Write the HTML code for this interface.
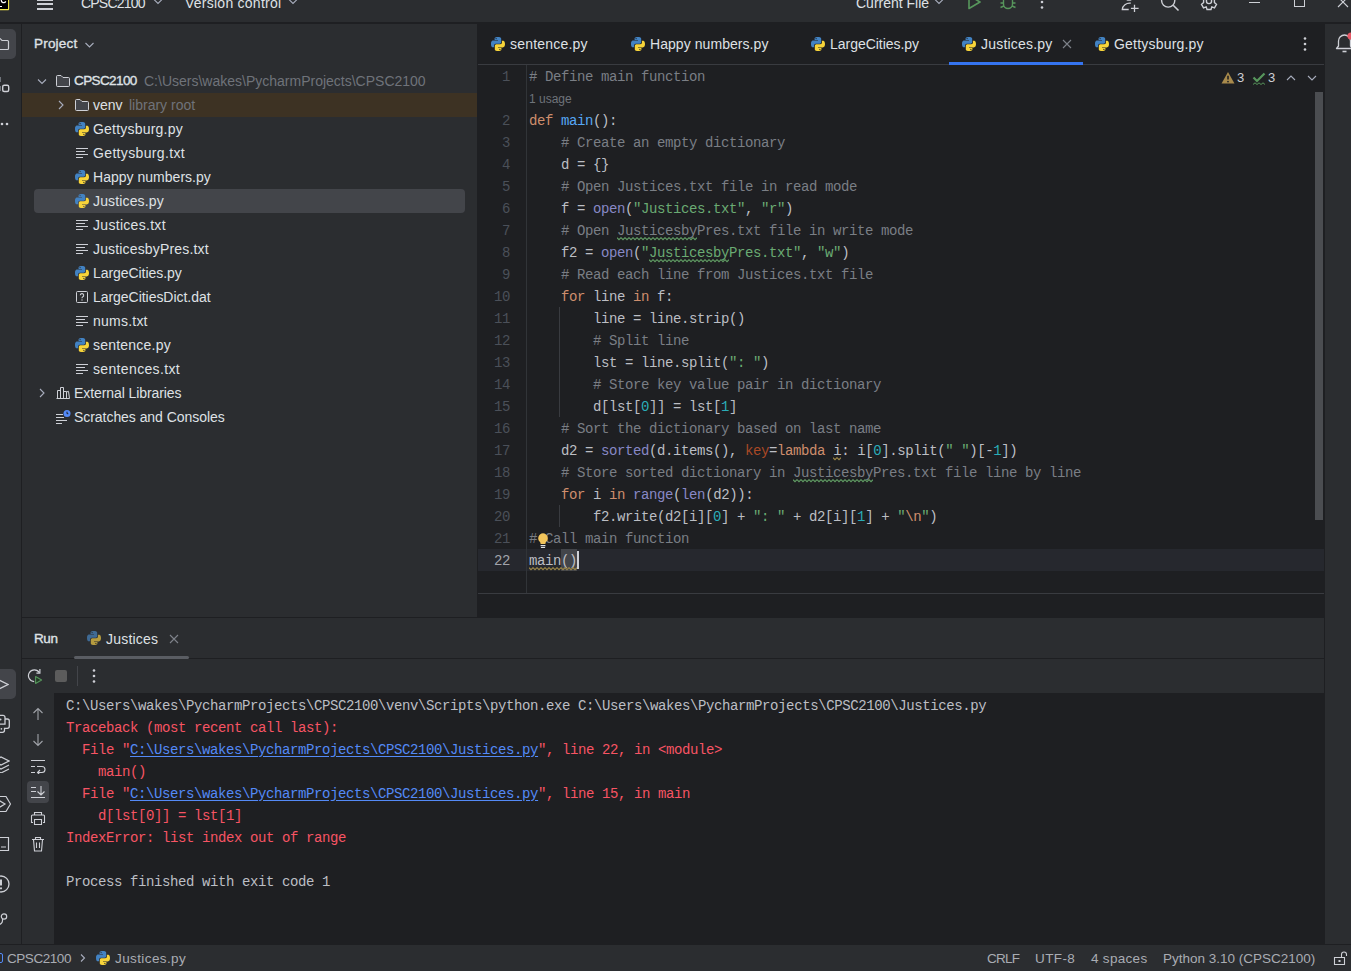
<!DOCTYPE html>
<html><head><meta charset="utf-8">
<style>
*{box-sizing:border-box;margin:0;padding:0}
html,body{width:1351px;height:971px;overflow:hidden;background:#2B2D30;font-family:"Liberation Sans",sans-serif;color:#DFE1E5}
.a{position:absolute}
.t{position:absolute;white-space:pre;font-size:14px;line-height:16px}
.ic{position:absolute}
.tn,.tb,.tg{position:absolute;white-space:pre;font-size:14px;letter-spacing:0.2px;line-height:24px;height:24px;color:#DFE1E5}
.tb{font-size:13.5px;letter-spacing:0;-webkit-text-stroke:0.35px #DFE1E5}
.tg{color:#6F737A;letter-spacing:0}
.sb{position:absolute;top:947px;white-space:pre;font-size:13.5px;line-height:24px;height:24px;color:#A9ACB3}
.tt{position:absolute;top:-5px;white-space:pre;font-size:14px;line-height:16px;height:16px;color:#DFE1E5}
/* editor */
.ln{position:absolute;left:478px;width:32px;text-align:right;font-family:"Liberation Mono",monospace;font-size:14px;letter-spacing:-0.4px;line-height:22px;height:22px;color:#4B5059}
.ln.cur{color:#A1A3AB}
.cl{position:absolute;left:529px;white-space:pre;font-family:"Liberation Mono",monospace;font-size:14px;letter-spacing:-0.4px;line-height:22px;height:22px;color:#BCBEC4}
.inlay{position:absolute;left:529px;font-size:12px;line-height:22px;height:22px;color:#6F737A;white-space:pre}
.cm{color:#7A7E85}.kw{color:#CF8E6D}.fn{color:#56A8F5}.st{color:#6AAB73}.nu{color:#2AACB8}.bi{color:#8888C6}.df{color:#BCBEC4}.ka{color:#AA4926}

/* console */
.co{position:absolute;left:66px;white-space:pre;font-family:"Liberation Mono",monospace;font-size:14px;letter-spacing:-0.4px;line-height:22px;height:22px;color:#BCBEC4}
.er{color:#F75464}
.lk{color:#548AF7;text-decoration:underline;text-underline-offset:2px}
</style></head>
<body>
<!-- top toolbar -->
<div class="a" style="left:0;top:0;width:1351px;height:23px;background:#2B2D30"></div>
<div class="a" style="left:0;top:22px;width:1351px;height:2px;background:#1E1F22"></div>
<svg class="ic" width="12" height="12" viewBox="0 0 12 12" style="left:0;top:0"><rect x="0" y="0" width="8.5" height="9.5" fill="#000"/><path fill="none" stroke="#F5EC4A" stroke-width="1.1" d="M0 9.6H8.2Q8.6 9.6 8.6 9.2V0"/><path fill="none" stroke="#fff" stroke-width="1.2" d="M1.3 0A2.4 2.4 0 0 0 5.8 1.4"/><path stroke="#fff" stroke-width="1.1" d="M0 6.5H2"/></svg>
<div class="a" style="left:37px;top:-1px;width:16px;height:2px;background:#CED0D6"></div>
<div class="a" style="left:37px;top:3px;width:16px;height:2px;background:#CED0D6"></div>
<div class="a" style="left:37px;top:8px;width:16px;height:2px;background:#CED0D6"></div>
<div class="tt" style="left:81px;letter-spacing:-0.8px">CPSC2100</div>
<svg class="ic" width="12" height="12" viewBox="0 0 12 12" style="left:152px;top:-5px"><path fill="none" stroke="#A8ADBD" stroke-width="1.1" d="M2 4.5L6 8.5L10 4.5"/></svg>
<div class="tt" style="left:185px;letter-spacing:0.25px">Version control</div>
<svg class="ic" width="12" height="12" viewBox="0 0 12 12" style="left:287px;top:-5px"><path fill="none" stroke="#A8ADBD" stroke-width="1.1" d="M2 4.5L6 8.5L10 4.5"/></svg>
<div class="tt" style="left:856px">Current File</div>
<svg class="ic" width="12" height="12" viewBox="0 0 12 12" style="left:933px;top:-5px"><path fill="none" stroke="#A8ADBD" stroke-width="1.1" d="M2 4.5L6 8.5L10 4.5"/></svg>
<svg class="ic" width="16" height="16" viewBox="0 0 16 16" style="left:966px;top:-6px"><path fill="none" stroke="#57965C" stroke-width="1.6" d="M3 1.5L14 8L3 14.5Z" stroke-linejoin="round"/></svg>
<svg class="ic" width="18" height="18" viewBox="0 0 18 18" style="left:999px;top:-8px"><path fill="none" stroke="#57965C" stroke-width="1.4" d="M4.5 4V12A4.5 4.5 0 0 0 13.5 12V4M1.5 11H4.5M13.5 11H16.5M1.5 15.5L4.8 14M16.5 15.5L13.2 14M1.5 6.5L4.5 7.5M16.5 6.5L13.5 7.5"/></svg>
<svg class="ic" width="4" height="16" viewBox="0 0 4 16" style="left:1040px;top:-6px"><circle cx="2" cy="2.5" r="1.3" fill="#CED0D6"/><circle cx="2" cy="8" r="1.3" fill="#CED0D6"/><circle cx="2" cy="13.5" r="1.3" fill="#CED0D6"/></svg>
<svg class="ic" width="20" height="20" viewBox="0 0 20 20" style="left:1120px;top:-8px"><circle cx="9" cy="5" r="3.2" fill="none" stroke="#CED0D6" stroke-width="1.3"/><path fill="none" stroke="#CED0D6" stroke-width="1.3" d="M8.7 17.5H2.3A7.5 6.5 0 0 1 10.8 11.2M14.5 12.8V20M10.9 16.4H18.6"/></svg>
<svg class="ic" width="20" height="20" viewBox="0 0 20 20" style="left:1160px;top:-8px"><circle cx="8.2" cy="8.5" r="6.6" fill="none" stroke="#CED0D6" stroke-width="1.4"/><path stroke="#CED0D6" stroke-width="1.6" d="M13.2 13.2L18.5 18.5"/></svg>
<svg class="ic" width="20" height="20" viewBox="0 0 20 20" style="left:1199px;top:-9px"><path fill="none" stroke="#CED0D6" stroke-width="1.4" d="M8 1.5H12L12.8 4.2L15.5 3.2L17.5 6.6L15.4 8.5V11.5L17.5 13.4L15.5 16.8L12.8 15.8L12 18.5H8L7.2 15.8L4.5 16.8L2.5 13.4L4.6 11.5V8.5L2.5 6.6L4.5 3.2L7.2 4.2Z"/><circle cx="10" cy="10" r="2.6" fill="none" stroke="#CED0D6" stroke-width="1.4"/></svg>
<div class="a" style="left:1249px;top:2px;width:11px;height:1px;background:#CED0D6"></div>
<div class="a" style="left:1294px;top:-4px;width:11px;height:11px;border:1px solid #CED0D6"></div>
<svg class="ic" width="12" height="12" viewBox="0 0 12 12" style="left:1337px;top:-4px"><path stroke="#CED0D6" stroke-width="1.1" d="M1 1L11 11M11 1L1 11"/></svg>

<!-- left strip -->
<div class="a" style="left:-14px;top:29px;width:30px;height:30px;border-radius:5px;background:#43454A"></div>
<svg class="ic" width="16" height="16" viewBox="0 0 16 16" style="left:-6px;top:36px"><path fill="none" stroke="#CED0D6" stroke-width="1.2" d="M1.5 3.5A1 1 0 0 1 2.5 2.5H6L8 4.5H13.5A1 1 0 0 1 14.5 5.5V12.5A1 1 0 0 1 13.5 13.5H2.5A1 1 0 0 1 1.5 12.5Z"/></svg>
<svg class="ic" width="12" height="24" viewBox="0 0 12 24" style="left:0;top:72px"><rect x="2.7" y="13.2" width="6" height="6.3" rx="1.5" fill="none" stroke="#CED0D6" stroke-width="1.4"/><rect x="0" y="5" width="1" height="5" fill="#6F737A"/><rect x="0" y="14" width="1" height="5" fill="#6F737A"/></svg>
<svg class="ic" width="16" height="16" viewBox="0 0 16 16" style="left:-6px;top:116px"><circle cx="3" cy="8" r="1.3" fill="#CED0D6"/><circle cx="8" cy="8" r="1.3" fill="#CED0D6"/><circle cx="13" cy="8" r="1.3" fill="#CED0D6"/></svg>
<div class="a" style="left:-14px;top:669px;width:30px;height:30px;border-radius:5px;background:#43454A"></div>
<svg class="ic" width="16" height="16" viewBox="0 0 16 16" style="left:-7px;top:676px"><path fill="none" stroke="#CED0D6" stroke-width="1.3" d="M3 2.5L15 8.5L3 14.5"/></svg>
<svg class="ic" width="12" height="30" viewBox="0 0 12 30" style="left:0;top:708px"><path fill="none" stroke="#CED0D6" stroke-width="1.3" d="M-2 7.4H3A2 2 0 0 1 5 9.4V16.2H-2M5 11H7.3A2 2 0 0 1 9.3 13V18.3A2 2 0 0 1 7.3 20.3H4.5V22.3A2 2 0 0 1 2.5 24.3H-2"/><circle cx="0.6" cy="11.5" r="0.9" fill="#CED0D6"/><circle cx="1.4" cy="20.8" r="0.9" fill="#CED0D6"/></svg>
<svg class="ic" width="18" height="18" viewBox="0 0 18 18" style="left:-8px;top:755px"><path fill="none" stroke="#CED0D6" stroke-width="1.2" d="M1 6L9 2L17 6L9 10ZM1 10L9 14L17 10M1 14L9 18L17 14"/></svg>
<svg class="ic" width="20" height="18" viewBox="0 0 20 18" style="left:-9px;top:795px"><path fill="none" stroke="#CED0D6" stroke-width="1.2" d="M5 1.5H15L19.5 9L15 16.5H5L0.5 9Z"/><path fill="none" stroke="#CED0D6" stroke-width="1.2" d="M7.5 5L14 9L7.5 13"/></svg>
<svg class="ic" width="18" height="16" viewBox="0 0 18 16" style="left:-8px;top:836px"><path fill="none" stroke="#CED0D6" stroke-width="1.2" d="M1.5 1.5H16.5V14.5H1.5ZM4 5L7 8L4 11M9 11H14"/></svg>
<svg class="ic" width="18" height="18" viewBox="0 0 18 18" style="left:-8px;top:875px"><circle cx="9" cy="9" r="8" fill="none" stroke="#CED0D6" stroke-width="1.3"/><path stroke="#CED0D6" stroke-width="2" d="M9 4.5V10.5"/><circle cx="9" cy="13.3" r="1.1" fill="#CED0D6"/></svg>
<svg class="ic" width="16" height="18" viewBox="0 0 16 18" style="left:-6px;top:911px"><path fill="none" stroke="#CED0D6" stroke-width="1.2" d="M4 1V17M4 13.5A4 4 0 0 0 8.5 9.5V8"/><circle cx="10" cy="5.5" r="2.7" fill="none" stroke="#CED0D6" stroke-width="1.2"/></svg>
<div class="a" style="left:21px;top:24px;width:1px;height:921px;background:#1E1F22"></div>
<!-- right strip -->
<svg class="ic" width="20" height="22" viewBox="0 0 20 22" style="left:1335px;top:32px"><path fill="none" stroke="#CED0D6" stroke-width="1.3" stroke-linejoin="round" d="M1.5 16.5L3.5 14V9A6 6 0 0 1 15.5 9V14L17.5 16.5Z"/><path stroke="#CED0D6" stroke-width="1.6" d="M7.5 19.5H11.5"/><circle cx="16" cy="4" r="3.6" fill="#E55765"/></svg>
<div class="a" style="left:1324px;top:24px;width:1px;height:921px;background:#1E1F22"></div>

<!-- project panel -->
<div class="a" style="left:22px;top:93px;width:455px;height:24px;background:#3D3223"></div>
<div class="a" style="left:34px;top:189px;width:431px;height:24px;border-radius:4px;background:#43454A"></div>
<div class="tb" style="left:34px;top:32px;letter-spacing:0.2px">Project</div>
<svg class="ic" width="16" height="16" viewBox="0 0 16 16" style="left:81px;top:37px"><path fill="none" stroke="#A8ADBD" stroke-width="1.1" d="M4.5 6L8.5 10L12.5 6"/></svg>
<svg class="ic" width="16" height="16" viewBox="0 0 16 16" style="left:34px;top:73px"><path fill="none" stroke="#A8ADBD" stroke-width="1.1" d="M4 6.5L8 10.5L12 6.5"/></svg>
<svg class="ic" width="16" height="16" viewBox="0 0 16 16" style="left:55px;top:73px"><path fill="#43454A" stroke="#CED0D6" stroke-width="1" d="M1.5 3.5A1 1 0 0 1 2.5 2.5H6L8 4.5H13.5A1 1 0 0 1 14.5 5.5V12.5A1 1 0 0 1 13.5 13.5H2.5A1 1 0 0 1 1.5 12.5Z"/></svg>
<div class="tb" style="left:74px;top:69px;letter-spacing:-0.6px">CPSC2100</div>
<div class="tg" style="left:144px;top:69px">C:\Users\wakes\PycharmProjects\CPSC2100</div>
<svg class="ic" width="16" height="16" viewBox="0 0 16 16" style="left:53px;top:97px"><path fill="none" stroke="#A8ADBD" stroke-width="1.1" d="M6 4L10 8L6 12"/></svg>
<svg class="ic" width="16" height="16" viewBox="0 0 16 16" style="left:74px;top:97px"><path fill="#43454A" stroke="#CED0D6" stroke-width="1" d="M1.5 3.5A1 1 0 0 1 2.5 2.5H6L8 4.5H13.5A1 1 0 0 1 14.5 5.5V12.5A1 1 0 0 1 13.5 13.5H2.5A1 1 0 0 1 1.5 12.5Z"/></svg>
<div class="tn" style="left:93px;top:93px;letter-spacing:-0.02px">venv</div>
<div class="tg" style="left:129px;top:93px">library root</div>
<svg class="ic" width="16" height="16" viewBox="0 0 16 16" style="left:74px;top:121px"><path fill="#4282C2" d="M7.9 1C4.4 1 4.6 2.5 4.6 2.5V4.1H8V4.6H3.2S1 4.3 1 7.9c0 3.5 1.9 3.4 1.9 3.4H4.1V9.6S4 7.7 6 7.7H9.3S11.2 7.8 11.2 5.9V2.8S11.5 1 7.9 1ZM6.1 2A.6.6 0 1 1 6.1 3.2.6.6 0 0 1 6.1 2Z"/><path fill="#F7D43A" d="M8.1 15c3.5 0 3.3-1.5 3.3-1.5V11.9H8V11.4h4.8S15 11.700 15 8.1c0-3.5-1.9-3.4-1.9-3.4H11.900V6.4S12 8.3 10 8.3H6.7S4.8 8.2 4.8 10.1v3.1S4.5 15 8.1 15ZM9.9 14A.6.6 0 1 1 9.9 12.8.6.6 0 0 1 9.9 14Z"/></svg>
<div class="tn" style="left:93px;top:117px;letter-spacing:0.21px">Gettysburg.py</div>
<svg class="ic" width="16" height="16" viewBox="0 0 16 16" style="left:74px;top:145px"><path stroke="#CED0D6" stroke-width="1.1" d="M2 3.5H14M2 6.5H11M2 9.5H14M2 12.5H9"/></svg>
<div class="tn" style="left:93px;top:141px;letter-spacing:0.35px">Gettysburg.txt</div>
<svg class="ic" width="16" height="16" viewBox="0 0 16 16" style="left:74px;top:169px"><path fill="#4282C2" d="M7.9 1C4.4 1 4.6 2.5 4.6 2.5V4.1H8V4.6H3.2S1 4.3 1 7.9c0 3.5 1.9 3.4 1.9 3.4H4.1V9.6S4 7.7 6 7.7H9.3S11.2 7.8 11.2 5.9V2.8S11.5 1 7.9 1ZM6.1 2A.6.6 0 1 1 6.1 3.2.6.6 0 0 1 6.1 2Z"/><path fill="#F7D43A" d="M8.1 15c3.5 0 3.3-1.5 3.3-1.5V11.9H8V11.4h4.8S15 11.700 15 8.1c0-3.5-1.9-3.4-1.9-3.4H11.900V6.4S12 8.3 10 8.3H6.7S4.8 8.2 4.8 10.1v3.1S4.5 15 8.1 15ZM9.9 14A.6.6 0 1 1 9.9 12.8.6.6 0 0 1 9.9 14Z"/></svg>
<div class="tn" style="left:93px;top:165px;letter-spacing:0.02px">Happy numbers.py</div>
<svg class="ic" width="16" height="16" viewBox="0 0 16 16" style="left:74px;top:193px"><path fill="#4282C2" d="M7.9 1C4.4 1 4.6 2.5 4.6 2.5V4.1H8V4.6H3.2S1 4.3 1 7.9c0 3.5 1.9 3.4 1.9 3.4H4.1V9.6S4 7.7 6 7.7H9.3S11.2 7.8 11.2 5.9V2.8S11.5 1 7.9 1ZM6.1 2A.6.6 0 1 1 6.1 3.2.6.6 0 0 1 6.1 2Z"/><path fill="#F7D43A" d="M8.1 15c3.5 0 3.3-1.5 3.3-1.5V11.9H8V11.4h4.8S15 11.700 15 8.1c0-3.5-1.9-3.4-1.9-3.4H11.900V6.4S12 8.3 10 8.3H6.7S4.8 8.2 4.8 10.1v3.1S4.5 15 8.1 15ZM9.9 14A.6.6 0 1 1 9.9 12.8.6.6 0 0 1 9.9 14Z"/></svg>
<div class="tn" style="left:93px;top:189px;letter-spacing:0.15px">Justices.py</div>
<svg class="ic" width="16" height="16" viewBox="0 0 16 16" style="left:74px;top:217px"><path stroke="#CED0D6" stroke-width="1.1" d="M2 3.5H14M2 6.5H11M2 9.5H14M2 12.5H9"/></svg>
<div class="tn" style="left:93px;top:213px;letter-spacing:0.30px">Justices.txt</div>
<svg class="ic" width="16" height="16" viewBox="0 0 16 16" style="left:74px;top:241px"><path stroke="#CED0D6" stroke-width="1.1" d="M2 3.5H14M2 6.5H11M2 9.5H14M2 12.5H9"/></svg>
<div class="tn" style="left:93px;top:237px;letter-spacing:0.16px">JusticesbyPres.txt</div>
<svg class="ic" width="16" height="16" viewBox="0 0 16 16" style="left:74px;top:265px"><path fill="#4282C2" d="M7.9 1C4.4 1 4.6 2.5 4.6 2.5V4.1H8V4.6H3.2S1 4.3 1 7.9c0 3.5 1.9 3.4 1.9 3.4H4.1V9.6S4 7.7 6 7.7H9.3S11.2 7.8 11.2 5.9V2.8S11.5 1 7.9 1ZM6.1 2A.6.6 0 1 1 6.1 3.2.6.6 0 0 1 6.1 2Z"/><path fill="#F7D43A" d="M8.1 15c3.5 0 3.3-1.5 3.3-1.5V11.9H8V11.4h4.8S15 11.700 15 8.1c0-3.5-1.9-3.4-1.9-3.4H11.900V6.4S12 8.3 10 8.3H6.7S4.8 8.2 4.8 10.1v3.1S4.5 15 8.1 15ZM9.9 14A.6.6 0 1 1 9.9 12.8.6.6 0 0 1 9.9 14Z"/></svg>
<div class="tn" style="left:93px;top:261px;letter-spacing:-0.06px">LargeCities.py</div>
<svg class="ic" width="16" height="16" viewBox="0 0 16 16" style="left:74px;top:289px"><rect x="2.5" y="2.5" width="11" height="11" rx="1" fill="none" stroke="#CED0D6"/><path d="M6.3 6.3A1.7 1.7 0 1 1 8.6 7.9C8 8.2 8 8.6 8 9.3" fill="none" stroke="#CED0D6" stroke-width="1.1"/><circle cx="8" cy="11" r=".7" fill="#CED0D6"/></svg>
<div class="tn" style="left:93px;top:285px;letter-spacing:-0.04px">LargeCitiesDict.dat</div>
<svg class="ic" width="16" height="16" viewBox="0 0 16 16" style="left:74px;top:313px"><path stroke="#CED0D6" stroke-width="1.1" d="M2 3.5H14M2 6.5H11M2 9.5H14M2 12.5H9"/></svg>
<div class="tn" style="left:93px;top:309px;letter-spacing:0.23px">nums.txt</div>
<svg class="ic" width="16" height="16" viewBox="0 0 16 16" style="left:74px;top:337px"><path fill="#4282C2" d="M7.9 1C4.4 1 4.6 2.5 4.6 2.5V4.1H8V4.6H3.2S1 4.3 1 7.9c0 3.5 1.9 3.4 1.9 3.4H4.1V9.6S4 7.7 6 7.7H9.3S11.2 7.8 11.2 5.9V2.8S11.5 1 7.9 1ZM6.1 2A.6.6 0 1 1 6.1 3.2.6.6 0 0 1 6.1 2Z"/><path fill="#F7D43A" d="M8.1 15c3.5 0 3.3-1.5 3.3-1.5V11.9H8V11.4h4.8S15 11.700 15 8.1c0-3.5-1.9-3.4-1.9-3.4H11.900V6.4S12 8.3 10 8.3H6.7S4.8 8.2 4.8 10.1v3.1S4.5 15 8.1 15ZM9.9 14A.6.6 0 1 1 9.9 12.8.6.6 0 0 1 9.9 14Z"/></svg>
<div class="tn" style="left:93px;top:333px;letter-spacing:0.22px">sentence.py</div>
<svg class="ic" width="16" height="16" viewBox="0 0 16 16" style="left:74px;top:361px"><path stroke="#CED0D6" stroke-width="1.1" d="M2 3.5H14M2 6.5H11M2 9.5H14M2 12.5H9"/></svg>
<div class="tn" style="left:93px;top:357px;letter-spacing:0.35px">sentences.txt</div>
<svg class="ic" width="16" height="16" viewBox="0 0 16 16" style="left:34px;top:385px"><path fill="none" stroke="#A8ADBD" stroke-width="1.1" d="M6 4L10 8L6 12"/></svg>
<svg class="ic" width="16" height="16" viewBox="0 0 16 16" style="left:55px;top:385px"><path fill="none" stroke="#CED0D6" d="M1.5 13.5H14.5M2.5 13.5V5.5H5.5V13.5M5.5 13.5V2.5H8.5V13.5M8.5 13.5V6.5H11.5V13.5"/><path fill="none" stroke="#CED0D6" d="M11.5 7L13.5 6.3L14.5 13.5"/></svg>
<div class="tn" style="left:74px;top:381px;letter-spacing:-0.08px">External Libraries</div>
<svg class="ic" width="16" height="16" viewBox="0 0 16 16" style="left:55px;top:409px"><path stroke="#CED0D6" stroke-width="1.1" d="M1 5.5H8M1 8.5H9M1 11.5H12M1 14.5H7"/><circle cx="12" cy="4.5" r="3.5" fill="#548AF7"/><path stroke="#1E1F22" stroke-width="1" d="M12 2.7V4.7H13.3" fill="none"/></svg>
<div class="tn" style="left:74px;top:405px;letter-spacing:-0.05px">Scratches and Consoles</div>
<div class="a" style="left:477px;top:24px;width:1px;height:594px;background:#1E1F22"></div>

<!-- editor -->
<div class="a" style="left:478px;top:24px;width:846px;height:594px;background:#1E1F22"></div>
<div class="a" style="left:478px;top:64px;width:846px;height:1px;background:#393B40"></div>
<svg class="ic" width="16" height="16" viewBox="0 0 16 16" style="left:490px;top:36px"><path fill="#4282C2" d="M7.9 1C4.4 1 4.6 2.5 4.6 2.5V4.1H8V4.6H3.2S1 4.3 1 7.9c0 3.5 1.9 3.4 1.9 3.4H4.1V9.6S4 7.7 6 7.7H9.3S11.2 7.8 11.2 5.9V2.8S11.5 1 7.9 1ZM6.1 2A.6.6 0 1 1 6.1 3.2.6.6 0 0 1 6.1 2Z"/><path fill="#F7D43A" d="M8.1 15c3.5 0 3.3-1.5 3.3-1.5V11.9H8V11.4h4.8S15 11.700 15 8.1c0-3.5-1.9-3.4-1.9-3.4H11.900V6.4S12 8.3 10 8.3H6.7S4.8 8.2 4.8 10.1v3.1S4.5 15 8.1 15ZM9.9 14A.6.6 0 1 1 9.9 12.8.6.6 0 0 1 9.9 14Z"/></svg>
<div class="tn" style="left:510px;top:32px;color:#DFE1E5;letter-spacing:0.20px">sentence.py</div>
<svg class="ic" width="16" height="16" viewBox="0 0 16 16" style="left:630px;top:36px"><path fill="#4282C2" d="M7.9 1C4.4 1 4.6 2.5 4.6 2.5V4.1H8V4.6H3.2S1 4.3 1 7.9c0 3.5 1.9 3.4 1.9 3.4H4.1V9.6S4 7.7 6 7.7H9.3S11.2 7.8 11.2 5.9V2.8S11.5 1 7.9 1ZM6.1 2A.6.6 0 1 1 6.1 3.2.6.6 0 0 1 6.1 2Z"/><path fill="#F7D43A" d="M8.1 15c3.5 0 3.3-1.5 3.3-1.5V11.9H8V11.4h4.8S15 11.700 15 8.1c0-3.5-1.9-3.4-1.9-3.4H11.900V6.4S12 8.3 10 8.3H6.7S4.8 8.2 4.8 10.1v3.1S4.5 15 8.1 15ZM9.9 14A.6.6 0 1 1 9.9 12.8.6.6 0 0 1 9.9 14Z"/></svg>
<div class="tn" style="left:650px;top:32px;color:#DFE1E5;letter-spacing:0.06px">Happy numbers.py</div>
<svg class="ic" width="16" height="16" viewBox="0 0 16 16" style="left:810px;top:36px"><path fill="#4282C2" d="M7.9 1C4.4 1 4.6 2.5 4.6 2.5V4.1H8V4.6H3.2S1 4.3 1 7.9c0 3.5 1.9 3.4 1.9 3.4H4.1V9.6S4 7.7 6 7.7H9.3S11.2 7.8 11.2 5.9V2.8S11.5 1 7.9 1ZM6.1 2A.6.6 0 1 1 6.1 3.2.6.6 0 0 1 6.1 2Z"/><path fill="#F7D43A" d="M8.1 15c3.5 0 3.3-1.5 3.3-1.5V11.9H8V11.4h4.8S15 11.700 15 8.1c0-3.5-1.9-3.4-1.9-3.4H11.900V6.4S12 8.3 10 8.3H6.7S4.8 8.2 4.8 10.1v3.1S4.5 15 8.1 15ZM9.9 14A.6.6 0 1 1 9.9 12.8.6.6 0 0 1 9.9 14Z"/></svg>
<div class="tn" style="left:830px;top:32px;color:#DFE1E5;letter-spacing:-0.03px">LargeCities.py</div>
<svg class="ic" width="16" height="16" viewBox="0 0 16 16" style="left:961px;top:36px"><path fill="#4282C2" d="M7.9 1C4.4 1 4.6 2.5 4.6 2.5V4.1H8V4.6H3.2S1 4.3 1 7.9c0 3.5 1.9 3.4 1.9 3.4H4.1V9.6S4 7.7 6 7.7H9.3S11.2 7.8 11.2 5.9V2.8S11.5 1 7.9 1ZM6.1 2A.6.6 0 1 1 6.1 3.2.6.6 0 0 1 6.1 2Z"/><path fill="#F7D43A" d="M8.1 15c3.5 0 3.3-1.5 3.3-1.5V11.9H8V11.4h4.8S15 11.700 15 8.1c0-3.5-1.9-3.4-1.9-3.4H11.900V6.4S12 8.3 10 8.3H6.7S4.8 8.2 4.8 10.1v3.1S4.5 15 8.1 15ZM9.9 14A.6.6 0 1 1 9.9 12.8.6.6 0 0 1 9.9 14Z"/></svg>
<div class="tn" style="left:981px;top:32px;color:#DFE1E5;letter-spacing:0.20px">Justices.py</div>
<svg class="ic" width="16" height="16" viewBox="0 0 16 16" style="left:1094px;top:36px"><path fill="#4282C2" d="M7.9 1C4.4 1 4.6 2.5 4.6 2.5V4.1H8V4.6H3.2S1 4.3 1 7.9c0 3.5 1.9 3.4 1.9 3.4H4.1V9.6S4 7.7 6 7.7H9.3S11.2 7.8 11.2 5.9V2.8S11.5 1 7.9 1ZM6.1 2A.6.6 0 1 1 6.1 3.2.6.6 0 0 1 6.1 2Z"/><path fill="#F7D43A" d="M8.1 15c3.5 0 3.3-1.5 3.3-1.5V11.9H8V11.4h4.8S15 11.700 15 8.1c0-3.5-1.9-3.4-1.9-3.4H11.900V6.4S12 8.3 10 8.3H6.7S4.8 8.2 4.8 10.1v3.1S4.5 15 8.1 15ZM9.9 14A.6.6 0 1 1 9.9 12.8.6.6 0 0 1 9.9 14Z"/></svg>
<div class="tn" style="left:1114px;top:32px;color:#DFE1E5;letter-spacing:0.20px">Gettysburg.py</div>
<svg class="ic" width="12" height="12" viewBox="0 0 12 12" style="left:1061px;top:38px"><path stroke="#7E828A" stroke-width="1.1" d="M2 2L10 10M10 2L2 10"/></svg>
<div class="a" style="left:949px;top:62px;width:134px;height:3px;background:#3574F0"></div>
<svg class="ic" width="4" height="16" viewBox="0 0 4 16" style="left:1303px;top:36px"><circle cx="2" cy="2.5" r="1.3" fill="#CED0D6"/><circle cx="2" cy="8" r="1.3" fill="#CED0D6"/><circle cx="2" cy="13.5" r="1.3" fill="#CED0D6"/></svg>
<svg class="ic" width="14" height="14" viewBox="0 0 14 14" style="left:1221px;top:71px"><path fill="#A88A4C" d="M7 1L13.5 12.5H0.5Z"/><path stroke="#1E1F22" stroke-width="1.6" d="M7 4.8V8.6"/><circle cx="7" cy="10.6" r=".9" fill="#1E1F22"/></svg>
<div class="a" style="left:1237px;top:70px;font-size:13px;line-height:16px;color:#CED0D6">3</div>
<svg class="ic" width="14" height="14" viewBox="0 0 14 14" style="left:1252px;top:72px"><path fill="none" stroke="#57965C" stroke-width="2.2" d="M1.5 5.5L5 9L12.5 1.5"/><path fill="none" stroke="#57965C" stroke-width="1" d="M1 12.5L3 10.8L5 12.5L7 10.8L9 12.5L11 10.8L13 12.5"/></svg>
<div class="a" style="left:1268px;top:70px;font-size:13px;line-height:16px;color:#CED0D6">3</div>
<svg class="ic" width="12" height="12" viewBox="0 0 12 12" style="left:1285px;top:72px"><path fill="none" stroke="#A8ADBD" stroke-width="1.1" d="M2 8L6 4L10 8"/></svg>
<svg class="ic" width="12" height="12" viewBox="0 0 12 12" style="left:1306px;top:72px"><path fill="none" stroke="#A8ADBD" stroke-width="1.1" d="M2 4L6 8L10 4"/></svg>
<div class="a" style="left:1315px;top:92px;width:8px;height:428px;background:#4B4D51"></div>
<div class="a" style="left:478px;top:549px;width:846px;height:22px;background:#26282E"></div>
<div class="a" style="left:526px;top:65px;width:1px;height:528px;background:#313438"></div>
<div class="a" style="left:478px;top:593px;width:846px;height:1px;background:#393B40"></div>
<div class="a" style="left:559px;top:307px;width:1px;height:110px;background:#393B40"></div>
<div class="a" style="left:559px;top:505px;width:1px;height:22px;background:#393B40"></div>
<div class="a" style="left:561px;top:549px;width:16px;height:22px;background:#43454A"></div>
<div class="ln" style="top:66px">1</div>
<div class="cl" style="top:66px"><span class="cm"># Define main function</span></div>
<div class="inlay" style="top:88px">1 usage</div>
<div class="ln" style="top:110px">2</div>
<div class="cl" style="top:110px"><span class="kw">def</span><span class="df"> </span><span class="fn">main</span><span class="df">():</span></div>
<div class="ln" style="top:132px">3</div>
<div class="cl" style="top:132px"><span class="df">    </span><span class="cm"># Create an empty dictionary</span></div>
<div class="ln" style="top:154px">4</div>
<div class="cl" style="top:154px"><span class="df">    d = {}</span></div>
<div class="ln" style="top:176px">5</div>
<div class="cl" style="top:176px"><span class="df">    </span><span class="cm"># Open Justices.txt file in read mode</span></div>
<div class="ln" style="top:198px">6</div>
<div class="cl" style="top:198px"><span class="df">    f = </span><span class="bi">open</span><span class="df">(</span><span class="st">"Justices.txt"</span><span class="df">, </span><span class="st">"r"</span><span class="df">)</span></div>
<div class="ln" style="top:220px">7</div>
<div class="cl" style="top:220px"><span class="df">    </span><span class="cm"># Open </span><span class="cm wv">Justicesby</span><span class="cm">Pres.txt file in write mode</span></div>
<div class="ln" style="top:242px">8</div>
<div class="cl" style="top:242px"><span class="df">    f2 = </span><span class="bi">open</span><span class="df">(</span><span class="st">"</span><span class="st wv">Justicesby</span><span class="st">Pres.txt"</span><span class="df">, </span><span class="st">"w"</span><span class="df">)</span></div>
<div class="ln" style="top:264px">9</div>
<div class="cl" style="top:264px"><span class="df">    </span><span class="cm"># Read each line from Justices.txt file</span></div>
<div class="ln" style="top:286px">10</div>
<div class="cl" style="top:286px"><span class="df">    </span><span class="kw">for</span><span class="df"> line </span><span class="kw">in</span><span class="df"> f:</span></div>
<div class="ln" style="top:308px">11</div>
<div class="cl" style="top:308px"><span class="df">        line = line.strip()</span></div>
<div class="ln" style="top:330px">12</div>
<div class="cl" style="top:330px"><span class="df">        </span><span class="cm"># Split line</span></div>
<div class="ln" style="top:352px">13</div>
<div class="cl" style="top:352px"><span class="df">        lst = line.split(</span><span class="st">": "</span><span class="df">)</span></div>
<div class="ln" style="top:374px">14</div>
<div class="cl" style="top:374px"><span class="df">        </span><span class="cm"># Store key value pair in dictionary</span></div>
<div class="ln" style="top:396px">15</div>
<div class="cl" style="top:396px"><span class="df">        d[lst[</span><span class="nu">0</span><span class="df">]] = lst[</span><span class="nu">1</span><span class="df">]</span></div>
<div class="ln" style="top:418px">16</div>
<div class="cl" style="top:418px"><span class="df">    </span><span class="cm"># Sort the dictionary based on last name</span></div>
<div class="ln" style="top:440px">17</div>
<div class="cl" style="top:440px"><span class="df">    d2 = </span><span class="bi">sorted</span><span class="df">(d.items(), </span><span class="ka">key</span><span class="df">=</span><span class="kw">lambda</span><span class="df"> </span><span class="df wk">i</span><span class="df">: i[</span><span class="nu">0</span><span class="df">].split(</span><span class="st">" "</span><span class="df">)[-</span><span class="nu">1</span><span class="df">])</span></div>
<div class="ln" style="top:462px">18</div>
<div class="cl" style="top:462px"><span class="df">    </span><span class="cm"># Store sorted dictionary in </span><span class="cm wv">Justicesby</span><span class="cm">Pres.txt file line by line</span></div>
<div class="ln" style="top:484px">19</div>
<div class="cl" style="top:484px"><span class="df">    </span><span class="kw">for</span><span class="df"> i </span><span class="kw">in</span><span class="df"> </span><span class="bi">range</span><span class="df">(</span><span class="bi">len</span><span class="df">(d2)):</span></div>
<div class="ln" style="top:506px">20</div>
<div class="cl" style="top:506px"><span class="df">        f2.write(d2[i][</span><span class="nu">0</span><span class="df">] + </span><span class="st">": "</span><span class="df"> + d2[i][</span><span class="nu">1</span><span class="df">] + </span><span class="st">"</span><span class="kw">\n</span><span class="st">"</span><span class="df">)</span></div>
<div class="ln" style="top:528px">21</div>
<div class="cl" style="top:528px"><span class="cm"># Call main function</span></div>
<div class="ln cur" style="top:550px">22</div>
<div class="cl" style="top:550px"><span class="df ww">main</span><span class="df ww bm">()</span></div>
<svg class="ic" width="80" height="4" viewBox="0 0 80 4" style="left:617px;top:237px"><polyline fill="none" stroke="#62A066" stroke-width="1.1" points="0,0.7 2,2.7 4,0.7 6,2.7 8,0.7 10,2.7 12,0.7 14,2.7 16,0.7 18,2.7 20,0.7 22,2.7 24,0.7 26,2.7 28,0.7 30,2.7 32,0.7 34,2.7 36,0.7 38,2.7 40,0.7 42,2.7 44,0.7 46,2.7 48,0.7 50,2.7 52,0.7 54,2.7 56,0.7 58,2.7 60,0.7 62,2.7 64,0.7 66,2.7 68,0.7 70,2.7 72,0.7 74,2.7 76,0.7 78,2.7 80,0.7"/></svg>
<svg class="ic" width="80" height="4" viewBox="0 0 80 4" style="left:649px;top:259px"><polyline fill="none" stroke="#62A066" stroke-width="1.1" points="0,0.7 2,2.7 4,0.7 6,2.7 8,0.7 10,2.7 12,0.7 14,2.7 16,0.7 18,2.7 20,0.7 22,2.7 24,0.7 26,2.7 28,0.7 30,2.7 32,0.7 34,2.7 36,0.7 38,2.7 40,0.7 42,2.7 44,0.7 46,2.7 48,0.7 50,2.7 52,0.7 54,2.7 56,0.7 58,2.7 60,0.7 62,2.7 64,0.7 66,2.7 68,0.7 70,2.7 72,0.7 74,2.7 76,0.7 78,2.7 80,0.7"/></svg>
<svg class="ic" width="80" height="4" viewBox="0 0 80 4" style="left:793px;top:479px"><polyline fill="none" stroke="#62A066" stroke-width="1.1" points="0,0.7 2,2.7 4,0.7 6,2.7 8,0.7 10,2.7 12,0.7 14,2.7 16,0.7 18,2.7 20,0.7 22,2.7 24,0.7 26,2.7 28,0.7 30,2.7 32,0.7 34,2.7 36,0.7 38,2.7 40,0.7 42,2.7 44,0.7 46,2.7 48,0.7 50,2.7 52,0.7 54,2.7 56,0.7 58,2.7 60,0.7 62,2.7 64,0.7 66,2.7 68,0.7 70,2.7 72,0.7 74,2.7 76,0.7 78,2.7 80,0.7"/></svg>
<svg class="ic" width="8" height="4" viewBox="0 0 8 4" style="left:833px;top:457px"><polyline fill="none" stroke="#A08A48" stroke-width="1.1" points="0,0.7 2,2.7 4,0.7 6,2.7 8,0.7"/></svg>
<svg class="ic" width="48" height="4" viewBox="0 0 48 4" style="left:529px;top:567px"><polyline fill="none" stroke="#A08A48" stroke-width="1.1" points="0,0.7 2,2.7 4,0.7 6,2.7 8,0.7 10,2.7 12,0.7 14,2.7 16,0.7 18,2.7 20,0.7 22,2.7 24,0.7 26,2.7 28,0.7 30,2.7 32,0.7 34,2.7 36,0.7 38,2.7 40,0.7 42,2.7 44,0.7 46,2.7 48,0.7"/></svg>
<svg class="ic" width="12" height="16" viewBox="0 0 12 16" style="left:537px;top:532px"><path fill="#F2C55C" d="M6 1.2A5 5 0 0 0 2.8 9.8C3.4 10.4 3.6 11 3.6 11.9H8.4C8.4 11 8.6 10.4 9.2 9.8A5 5 0 0 0 6 1.2Z"/><path stroke="#DFE1E5" stroke-width="1.2" d="M3.6 13.6H8.4M3.9 15.6H8.1"/></svg>
<div class="a" style="left:577px;top:551px;width:2px;height:18px;background:#CED0D6"></div>

<!-- run panel -->
<div class="a" style="left:22px;top:617px;width:1302px;height:1px;background:#1E1F22"></div>
<div class="a" style="left:22px;top:658px;width:1302px;height:1px;background:#1E1F22"></div>
<div class="a" style="left:54px;top:693px;width:1270px;height:251px;background:#1E1F22"></div>
<div class="tb" style="left:34px;top:627px;letter-spacing:-0.4px">Run</div>
<svg class="ic" width="16" height="16" viewBox="0 0 16 16" style="left:86px;top:630px"><path fill="#3F6A94" d="M7.9 1C4.4 1 4.6 2.5 4.6 2.5V4.1H8V4.6H3.2S1 4.3 1 7.9c0 3.5 1.9 3.4 1.9 3.4H4.1V9.6S4 7.7 6 7.7H9.3S11.2 7.8 11.2 5.9V2.8S11.5 1 7.9 1ZM6.1 2A.6.6 0 1 1 6.1 3.2.6.6 0 0 1 6.1 2Z"/><path fill="#B59B3F" d="M8.1 15c3.5 0 3.3-1.5 3.3-1.5V11.9H8V11.4h4.8S15 11.700 15 8.1c0-3.5-1.9-3.4-1.9-3.4H11.900V6.4S12 8.3 10 8.3H6.7S4.8 8.2 4.8 10.1v3.1S4.5 15 8.1 15ZM9.9 14A.6.6 0 1 1 9.9 12.8.6.6 0 0 1 9.9 14Z"/></svg>
<div class="tn" style="left:106px;top:627px">Justices</div>
<svg class="ic" width="12" height="12" viewBox="0 0 12 12" style="left:168px;top:633px"><path stroke="#7E828A" stroke-width="1.1" d="M2 2L10 10M10 2L2 10"/></svg>
<div class="a" style="left:74px;top:656px;width:115px;height:3px;border-radius:2px;background:#5A5D63"></div>
<svg class="ic" width="17" height="17" viewBox="0 0 17 17" style="left:27px;top:668px"><path fill="none" stroke="#CED0D6" stroke-width="1.2" d="M7.2 13.6A5.9 5.9 0 1 1 12.4 4.6"/><path fill="none" stroke="#CED0D6" stroke-width="1.2" d="M12.9 1V5.2H9.4"/><path fill="#213A25" stroke="#57965C" stroke-width="1.1" stroke-linejoin="round" d="M8.6 8.6L14.6 12L8.6 15.4Z"/></svg>
<div class="a" style="left:55px;top:670px;width:12px;height:12px;border-radius:2px;background:#5C5C5C"></div>
<div class="a" style="left:77px;top:666px;width:1px;height:20px;background:#43454A"></div>
<svg class="ic" width="4" height="16" viewBox="0 0 4 16" style="left:92px;top:668px"><circle cx="2" cy="2.5" r="1.3" fill="#CED0D6"/><circle cx="2" cy="8" r="1.3" fill="#CED0D6"/><circle cx="2" cy="13.5" r="1.3" fill="#CED0D6"/></svg>
<!-- console side icons -->
<svg class="ic" width="16" height="16" viewBox="0 0 16 16" style="left:30px;top:706px"><path fill="none" stroke="#9FA2A8" stroke-width="1.1" d="M8 14V2.5M3.5 7L8 2.5L12.5 7"/></svg>
<svg class="ic" width="16" height="16" viewBox="0 0 16 16" style="left:30px;top:732px"><path fill="none" stroke="#9FA2A8" stroke-width="1.1" d="M8 2V13.5M3.5 9L8 13.5L12.5 9"/></svg>
<svg class="ic" width="16" height="16" viewBox="0 0 16 16" style="left:30px;top:758px"><path fill="none" stroke="#CED0D6" stroke-width="1.1" d="M1 2.5H15M1 8.5H5M1 14.5H5M8 14.5H12A3 3 0 0 0 12 8.5H7M10 12L7.5 14.5L10 17"/></svg>
<div class="a" style="left:27px;top:781px;width:22px;height:22px;border-radius:4px;background:#43454A"></div>
<svg class="ic" width="16" height="16" viewBox="0 0 16 16" style="left:30px;top:784px"><path fill="none" stroke="#CED0D6" stroke-width="1.1" d="M1 3.5H6M1 7.5H6M1 13.5H15M11 2V11M7.5 7.5L11 11L14.5 7.5"/></svg>
<svg class="ic" width="16" height="16" viewBox="0 0 16 16" style="left:30px;top:810px"><path fill="none" stroke="#CED0D6" stroke-width="1.1" d="M4.5 5V2.5H11.5V5M3 12.5H1.5V6A1 1 0 0 1 2.5 5H13.5A1 1 0 0 1 14.5 6V12.5H13M4.5 9.5H11.5V14.5H4.5Z"/></svg>
<svg class="ic" width="16" height="16" viewBox="0 0 16 16" style="left:30px;top:836px"><path fill="none" stroke="#CED0D6" stroke-width="1.1" d="M2 3.5H14M5.5 3.5V1.5H10.5V3.5M3.5 3.5L4.5 15H11.5L12.5 3.5M6.5 6.5V12M9.5 6.5V12"/></svg>
<div class="co" style="top:695px"><span class="">C:\Users\wakes\PycharmProjects\CPSC2100\venv\Scripts\python.exe C:\Users\wakes\PycharmProjects\CPSC2100\Justices.py</span></div>
<div class="co" style="top:717px"><span class="er">Traceback (most recent call last):</span></div>
<div class="co" style="top:739px"><span class="er">  File "</span><span class="lk">C:\Users\wakes\PycharmProjects\CPSC2100\Justices.py</span><span class="er">", line 22, in &lt;module&gt;</span></div>
<div class="co" style="top:761px"><span class="er">    main()</span></div>
<div class="co" style="top:783px"><span class="er">  File "</span><span class="lk">C:\Users\wakes\PycharmProjects\CPSC2100\Justices.py</span><span class="er">", line 15, in main</span></div>
<div class="co" style="top:805px"><span class="er">    d[lst[0]] = lst[1]</span></div>
<div class="co" style="top:827px"><span class="er">IndexError: list index out of range</span></div>
<div class="co" style="top:871px"><span class="">Process finished with exit code 1</span></div>

<!-- status bar -->
<div class="a" style="left:0;top:944px;width:1351px;height:1px;background:#1E1F22"></div>
<div class="a" style="left:-8px;top:953px;width:11px;height:10px;border:1.5px solid #548AF7;border-radius:2px"></div>
<div class="sb" style="left:7px;letter-spacing:-0.45px">CPSC2100</div>
<svg class="ic" width="16" height="16" viewBox="0 0 16 16" style="left:75px;top:950px"><path fill="none" stroke="#A8ADBD" stroke-width="1.1" d="M6 4.5L9.5 8L6 11.5"/></svg>
<svg class="ic" width="16" height="16" viewBox="0 0 16 16" style="left:95px;top:950px"><path fill="#4282C2" d="M7.9 1C4.4 1 4.6 2.5 4.6 2.5V4.1H8V4.6H3.2S1 4.3 1 7.9c0 3.5 1.9 3.4 1.9 3.4H4.1V9.6S4 7.7 6 7.7H9.3S11.2 7.8 11.2 5.9V2.8S11.5 1 7.9 1ZM6.1 2A.6.6 0 1 1 6.1 3.2.6.6 0 0 1 6.1 2Z"/><path fill="#F7D43A" d="M8.1 15c3.5 0 3.3-1.5 3.3-1.5V11.9H8V11.4h4.8S15 11.700 15 8.1c0-3.5-1.9-3.4-1.9-3.4H11.900V6.4S12 8.3 10 8.3H6.7S4.8 8.2 4.8 10.1v3.1S4.5 15 8.1 15ZM9.9 14A.6.6 0 1 1 9.9 12.8.6.6 0 0 1 9.9 14Z"/></svg>
<div class="sb" style="left:115px;letter-spacing:0.4px">Justices.py</div>
<div class="sb" style="left:987px;letter-spacing:-0.75px">CRLF</div>
<div class="sb" style="left:1035px;letter-spacing:0.4px">UTF-8</div>
<div class="sb" style="left:1091px;letter-spacing:0.3px">4 spaces</div>
<div class="sb" style="left:1163px">Python 3.10 (CPSC2100)</div>
<svg class="ic" width="16" height="16" viewBox="0 0 16 16" style="left:1333px;top:950px"><path fill="none" stroke="#CED0D6" stroke-width="1.1" d="M1.5 7.5H11.5V14.5H1.5ZM8.5 7.5V4.5A2.5 2.5 0 0 1 13.5 4.5V6"/><rect x="5.5" y="10" width="2" height="2" fill="#CED0D6"/></svg>
</body></html>
